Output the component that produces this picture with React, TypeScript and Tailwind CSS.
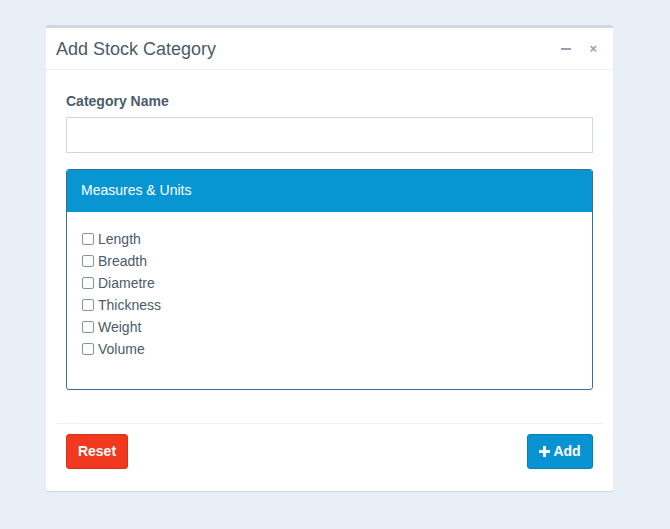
import React from 'react';

const measures = ['Length', 'Breadth', 'Diametre', 'Thickness', 'Weight', 'Volume'];

export default function App() {
  return (
    <div
      className="w-[670px] h-[529px] bg-[#e9eff6] pt-[25px] pl-[46px]"
      style={{ fontFamily: '"Liberation Sans", Arial, sans-serif' }}
    >
      <div className="w-[567px] h-[466px] bg-white border-t-[3px] border-[#d2d6de] rounded-[3px] shadow-[0_1px_1px_rgba(0,0,0,0.1)] flex flex-col">
        <div className="h-[42px] flex items-center justify-between pl-[10px] pr-[16px] border-b border-[#eef1f4]">
          <h3 className="text-[18px] text-[#4b5b6a] leading-none">Add Stock Category</h3>
          <div className="flex items-center gap-[18px] text-[#97a0b3]">
            <span className="block w-[10px] h-[2px] bg-[#97a0b3]" />
            <span className="text-[13px] font-bold leading-none">×</span>
          </div>
        </div>

        <div className="px-[20px] pt-[24px] pb-[33px]">
          <label className="block text-[14px] font-bold text-[#4b5b6a] leading-none mb-[9px]">
            Category Name
          </label>
          <input
            type="text"
            className="block w-[527px] h-[36px] border border-[#d2d6de] outline-none px-3 text-[14px]"
          />

          <div className="mt-[16px] w-[527px] h-[221px] border border-[#3e6f92] rounded-[3px] flex flex-col overflow-hidden">
            <div className="h-[43px] bg-[#0896d3] flex items-center px-[15px] -mx-px -mt-px">
              <span className="text-[14px] text-white">Measures &amp; Units</span>
            </div>
            <div className="pt-[16px] pl-[15px] flex flex-col">
              {measures.map((m) => (
                <label key={m} className="flex items-center h-[22px] text-[14px] text-[#4b5b6a] cursor-pointer">
                  <span className="w-[12px] h-[12px] border border-[#8a939c] rounded-[2px] bg-white mr-[4px]" />
                  {m}
                </label>
              ))}
            </div>
          </div>
        </div>

        <div className="mx-[10px] border-t border-[#eef1f4] pt-[10px] px-[10px] flex justify-between">
          <button className="w-[62px] h-[35px] bg-[#f0391e] border border-[#d8321a] rounded-[3px] text-white text-[14px] font-bold">
            Reset
          </button>
          <button className="w-[66px] h-[35px] bg-[#0894d3] border border-[#0680b8] rounded-[3px] text-white text-[14px] font-bold flex items-center justify-center gap-[3px]">
            <svg width="11" height="11" viewBox="0 0 11 11">
              <path d="M4 0h3v4h4v3H7v4H4V7H0V4h4z" fill="white" />
            </svg>
            Add
          </button>
        </div>
      </div>
    </div>
  );
}
